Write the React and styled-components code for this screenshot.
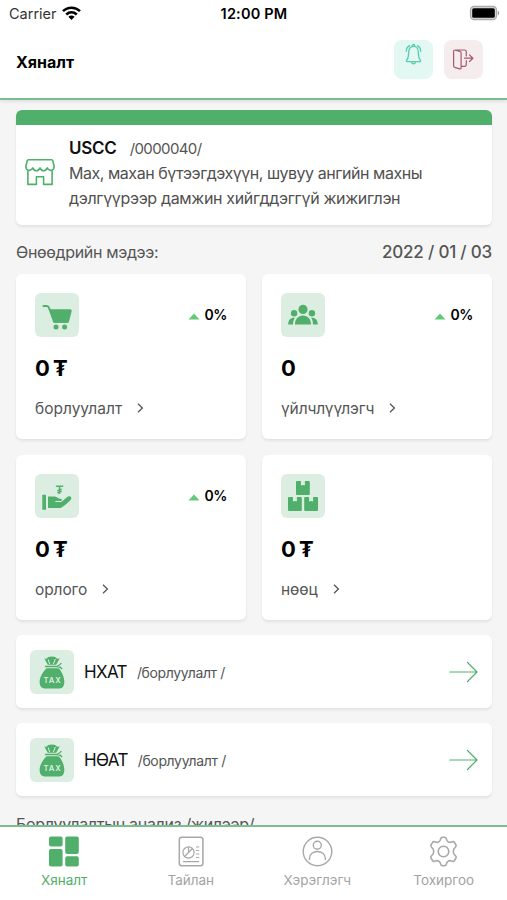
import React from "react";
import styled, { createGlobalStyle, css } from "styled-components";

const GREEN = "#50af6a";
const RULE = "#78be8e";

const GlobalStyle = createGlobalStyle`
  * { box-sizing: border-box; }
  body { margin: 0; background: #f5f5f5; overflow: hidden; }
`;

const type = css`
  font-size: ${(p) => p.$size}px;
  letter-spacing: ${(p) => p.$track || 0}px;
  white-space: nowrap;
`;

const Screen = styled.div`
  display: flex;
  flex-direction: column;
  width: 507px;
  height: 900px;
  background: #f5f5f5;
  font-family: Inter, "Noto Sans", "Liberation Sans", sans-serif;
  color: #000;
`;

const StatusBar = styled.div`
  display: grid;
  grid-template-columns: 1fr auto 1fr;
  align-items: center;
  height: 28px;
  padding: 0 7px 0 8px;
  background: #fff;
  flex: none;
  svg { display: block; }
`;
const Carrier = styled.div`
  display: flex;
  align-items: center;
  gap: 5px;
  padding-left: 1px;
  color: #333;
  line-height: 28px;
  ${type}
  svg { margin-top: -2px; }
`;
const Clock = styled.div`
  font-weight: 600;
  line-height: 28px;
  ${type}
`;
const BatterySlot = styled.div`
  justify-self: end;
  margin-top: -2px;
`;

const Header = styled.header`
  display: flex;
  align-items: center;
  height: 72px;
  padding: 0 24px 7px 16px;
  gap: 11px;
  background: #fff;
  border-bottom: 2px solid ${RULE};
  box-shadow: 0 2px 3px rgba(0, 0, 0, 0.08);
  flex: none;
  z-index: 1;
`;
const Title = styled.h1`
  margin: 4px auto 0 0;
  font-weight: 700;
  ${type}
`;
const HeaderButton = styled.button`
  width: 39px;
  height: 39px;
  padding: 0;
  border: 0;
  border-radius: 8px;
  background: ${(p) => p.$bg};
  svg { display: block; }
`;

const Content = styled.main`
  flex: 1;
  min-height: 0;
  overflow: hidden;
  padding: 10px 15px 0 16px;
`;

const cardBox = css`
  background: #fff;
  border-radius: 6px;
  box-shadow: 0 2px 3px rgba(0, 0, 0, 0.08);
`;
const StoreCard = styled.section`
  ${cardBox}
  height: 115px;
  border-top: 15px solid ${GREEN};
  display: flex;
  padding: 10px 0 0 8px;
  gap: 13px;
  svg { display: block; margin-top: 23px; flex: none; }
`;
const StoreHead = styled.div`
  display: flex;
  align-items: baseline;
  gap: 13px;
  height: 26px;
  line-height: 26px;
`;
const StoreName = styled.strong`
  font-weight: 600;
  color: #111;
  ${type}
`;
const Muted = styled.span`
  color: ${(p) => p.$color || "#555"};
  font-weight: ${(p) => p.$weight || 400};
  ${type}
`;
const Description = styled.p`
  margin: 0;
  color: #505050;
  line-height: 24.5px;
  ${type}
`;
const DescriptionLine = styled.span`
  display: block;
  letter-spacing: ${(p) => p.$track}px;
`;

const SectionRow = styled.div`
  display: flex;
  justify-content: space-between;
  align-items: center;
  height: 49px;
  padding-top: 4px;
`;

const Grid = styled.div`
  display: grid;
  grid-template-columns: 1fr 1fr;
  gap: 16px;
`;
const StatCard = styled.article`
  ${cardBox}
  height: 165px;
  padding: 19px 19px 0;
`;
const StatTop = styled.div`
  display: flex;
  justify-content: space-between;
  align-items: center;
`;
const IconTile = styled.div`
  width: 44px;
  height: 44px;
  border-radius: 6px;
  background: #dceee2;
  flex: none;
  svg { display: block; }
`;
const Change = styled.div`
  display: flex;
  align-items: center;
  gap: 5px;
  font-weight: 600;
  line-height: 20px;
  ${type}
  svg { display: block; margin-top: 2px; }
`;
const Value = styled.div`
  margin-top: 16px;
  height: 30px;
  line-height: 30px;
  font-weight: 700;
  word-spacing: -2px;
  ${type}
`;
const StatLink = styled.div`
  display: flex;
  align-items: center;
  gap: 15px;
  height: 24px;
  margin-top: 13px;
  svg { display: block; margin-top: -1px; }
`;

const TaxRow = styled.article`
  ${cardBox}
  display: flex;
  align-items: center;
  height: 73px;
  margin-top: 15px;
  padding: 0 14px;
`;
const TaxText = styled.div`
  display: flex;
  align-items: baseline;
  gap: 10px;
  margin-left: 10px;
  flex: 1;
`;
const TaxName = styled.span`
  color: #111;
  ${type}
`;
const NextHeading = styled.div`
  margin-top: 15px;
  line-height: 26px;
`;

const TabBar = styled.nav`
  display: grid;
  grid-template-columns: repeat(4, 1fr);
  height: 75px;
  padding-left: 1px;
  border-top: 2px solid ${RULE};
  background: #fff;
  flex: none;
`;
const Tab = styled.div`
  display: flex;
  flex-direction: column;
  align-items: center;
  padding-top: 9px;
  color: ${(p) => (p.$active ? GREEN : "#a3a3a3")};
  svg { display: block; }
`;
const TabLabel = styled.span`
  margin-top: 3px;
  line-height: 20px;
  ${type}
`;

const Wifi = () => (
  <svg width="19" height="15" viewBox="0 0 19 15">
    <g fill="none" stroke="#000" strokeWidth="2.5">
      <path d="M1 5.2C5.8.5 13.200.5 18 5.200" />
      <path d="M4.200 8.500c3.200-2.900 7.400-2.900 10.600 0" />
    </g>
    <path d="M6.400 10.800c1.900-1.600 4.300-1.600 6.200 0L9.500 14z" />
  </svg>
);
const Battery = () => (
  <svg width="31" height="16" viewBox="0 0 31 16">
    <rect x="1.500" y="1.500" width="26" height="13" rx="3.500" fill="#ddd" stroke="#aaa" strokeWidth="1.300" />
    <rect x="3.200" y="3.200" width="22.600" height="9.600" rx="1.500" />
    <path d="M28.800 5.700v4.600c1.800-.6 1.800-4 0-4.600" fill="#999" />
  </svg>
);
const Bell = () => (
  <svg width="39" height="39" viewBox="0 0 39 39" fill="none" stroke="#55cdb0" strokeWidth="1.300" strokeLinecap="round" strokeLinejoin="round">
    <path d="M19.500 6.300c-3.500 0-4.800 2.900-4.800 5.900 0 4.600-.8 6.500-2.100 8.200-.5.700-.2 1.300.6 1.300h12.600c.8 0 1.100-.6.600-1.300-1.300-1.700-2.100-3.600-2.100-8.200 0-3-1.300-5.900-4.800-5.900z" />
    <path d="M17.700 22.100c.2 2.300 3.400 2.300 3.600 0M18.300 6c0-2 2.400-2 2.400 0M12.300 11.200c0-2.600 1.200-4.400 3.300-5.500M26.700 11.200c0-2.600-1.200-4.400-3.300-5.500" />
  </svg>
);
const Exit = () => (
  <svg width="39" height="39" viewBox="0 0 39 39" fill="none" stroke="#a65a6d" strokeWidth="1.200" strokeLinecap="round" strokeLinejoin="round">
    <path d="M11.500 10.200l4.300 1.100q1.300.4 1.300 1.700v14.700q0 1.600-1.500 1.100l-4.800-1.400q-1.200-.4-1.200-1.700V11.600q0-1.600 1.600-1.600h9.300q1.800 0 1.800 1.700v4.200M22.300 20.500v4.100q0 1.700-1.700 1.700h-3.300" />
    <path d="M20.500 18.200h8M25.500 14.900l3.400 3.300-3.400 3.300" />
  </svg>
);
const Store = () => (
  <svg width="32" height="28" viewBox="0 0 32 28" fill="none" stroke={GREEN} strokeWidth="1.600" strokeLinejoin="round" strokeLinecap="round">
    <path d="M4.500 1.800h23q1 0 1.300 1l1.300 5.400c0 4.900-5 5.500-6.900 1.700-1.500 3.800-5.700 3.800-7.200 0-1.500 3.800-5.700 3.800-7.200 0C6.900 13.700 1.900 13.100 1.900 8.200l1.300-5.400q.3-1 1.300-1z" />
    <path d="M3.900 12.700v13.700h8.500v-7.600h7.200v7.600h8.500V12.700" />
  </svg>
);
const Cart = () => (
  <svg width="44" height="44" viewBox="0 0 44 44" fill={GREEN}>
    <path d="M8.500 13h3.200c1.300 0 2 .8 2.400 2l5 13.800h13.600" fill="none" stroke={GREEN} strokeWidth="2" strokeLinecap="round" />
    <path d="M14.500 16.200h20.300c1.600 0 2.200.8 1.800 2.200l-2.300 9c-.4 1.600-1.200 2.400-2.700 2.400H19.400z" />
    <circle cx="21" cy="33.900" r="2.500" />
    <circle cx="29.600" cy="33.900" r="2.500" />
  </svg>
);
const People = () => (
  <svg width="44" height="44" viewBox="0 0 44 44" fill={GREEN}>
    <circle cx="22" cy="16.400" r="4.600" />
    <circle cx="13.100" cy="20.300" r="3.200" />
    <circle cx="30.900" cy="20.300" r="3.200" />
    <path d="M14 31.500c0-5.500 3.300-9 8-9s8 3.500 8 9zM7.200 31.500c0-4.400 2.500-7.200 6.700-6.800-1.300 1.800-1.900 4-1.900 6.800zM36.800 31.500c0-4.400-2.500-7.200-6.700-6.800 1.300 1.800 1.900 4 1.900 6.800z" />
  </svg>
);
const HandMoney = () => (
  <svg width="44" height="44" viewBox="0 0 44 44" fill={GREEN}>
    <rect x="7.300" y="20.800" width="3.700" height="15" rx=".5" />
    <path d="M13 22.500h6.600c2 0 3.200 2.200 5.200 2.200h1c1.400 0 1.500 2.300 0 2.300h-5.500v1h6l5.600-4.800c2.600-2.200 5.600.1 4 2.200-2.300 3-5.300 4.900-8.600 7.500q-1.600 1.200-3.600 1.200H13z" />
    <path d="M20.900 12.300h7.300M24.500 12.300v7.700M22.400 16.700l4.300-1.600M22.400 18.900l4.300-1.600" fill="none" stroke={GREEN} strokeWidth="1.500" />
  </svg>
);
const Boxes = () => (
  <svg width="44" height="44" viewBox="0 0 44 44" fill={GREEN}>
    {[[15, 7], [7, 23], [23.200, 23]].map(([x, y]) => (
      <path key={x} transform={`translate(${x} ${y})`} d="M1 0h3.900v4.600q2-1.300 4 0V0h3.900q1 0 1 1v12q0 1-1 1H1q-1 0-1-1V1q0-1 1-1z" />
    ))}
  </svg>
);
const BagLabel = styled.text`
  font: 600 7.7px Inter, sans-serif;
  letter-spacing: 0.9px;
`;
const TaxBag = () => (
  <svg width="44" height="44" viewBox="0 0 44 44" fill={GREEN}>
    <path d="M14.200 8.200q2.300 1.400 4-1.100 4-1 7 0 2 2.500 4.600 1.100l-3.600 6.600h-8.500z" />
    <path d="M18.200 9.500l1.500 4.700M25.400 9l-2 5" stroke="#dceee2" strokeWidth="1" />
    <path d="M16.500 18.200h12.200c3.300 3.500 5.600 9 5.600 13.600 0 4.800-2 6.800-6 6.800H15.800c-4 0-6.200-2-6.200-6.500 0-5 3.200-10.300 6.900-13.900z" />
    <path d="M15 16.500h12.500q3.300.2 4.600 2.600M27.500 16q3-1.200 3.800-3" fill="none" stroke={GREEN} strokeWidth="1.300" />
    <BagLabel x="22.600" y="33.300" textAnchor="middle" fill="#dceee2">TAX</BagLabel>
  </svg>
);
const Up = () => (
  <svg width="12" height="7" viewBox="0 0 12 7"><path d="M.5 6.500L6 .5l5.500 6z" fill="#62ca79" /></svg>
);
const Chevron = () => (
  <svg width="7" height="10" viewBox="0 0 7 10" fill="none" stroke="#555" strokeWidth="1.300"><path d="M1 .8L5.400 5 1 9.200" /></svg>
);
const Arrow = () => (
  <svg width="29" height="22" viewBox="0 0 29 22" fill="none" stroke={GREEN} strokeWidth="1.200" strokeLinecap="round" strokeLinejoin="round">
    <path d="M.8 11h27M18.500 1.500L28 11l-9.500 9.500" />
  </svg>
);
const Dashboard = () => (
  <svg width="30" height="31" viewBox="0 0 30 31" fill={GREEN}>
    <rect x="0" y=".5" width="13.600" height="10" rx="2" />
    <rect x="0" y="13" width="13.600" height="17.500" rx="2" />
    <rect x="16.200" y=".5" width="13.600" height="17.500" rx="2" />
    <rect x="16.200" y="20.300" width="13.600" height="10.200" rx="2" />
  </svg>
);
const Report = () => (
  <svg width="30" height="31" viewBox="0 0 30 31" fill="none" stroke="#a8a8a8" strokeWidth="1.200">
    <rect x="3.300" y="1.200" width="23.600" height="28.600" rx="2.500" strokeWidth="1.500" />
    <circle cx="12.500" cy="16.500" r="5.600" />
    <path d="M12.500 10.900v5.600l-3.900 4M12.500 16.500l3.900-4M20 11h3.200M20 14.500h3.200M20 18h3.200M20 21.500h3.200M7 25.700h16.200" />
  </svg>
);
const User = () => (
  <svg width="31" height="31" viewBox="0 0 31 31" fill="none" stroke="#a8a8a8" strokeWidth="1.400">
    <circle cx="15.500" cy="15.500" r="14.300" />
    <circle cx="15.300" cy="9.300" r="4" />
    <path d="M7.500 24v-1.500c0-9.300 15.800-9.300 15.800 0V24" />
  </svg>
);
const Gear = () => (
  <svg width="31" height="31" viewBox="0 0 31 31" fill="none" stroke="#a8a8a8" strokeWidth="1.600" strokeLinejoin="round">
    <circle cx="15.500" cy="15.500" r="5.300" />
    <path d="M12.600 3q.4-1.800 1.900-1.800h2q1.500 0 1.900 1.800.3 2.200 2 3 1.500.8 3.400-.1 1.800-.8 2.600.4l1.600 2.700q.7 1.300-.9 2.600-1.800 1.200-1.800 3.900t1.800 3.900q1.600 1.300.9 2.600l-1.600 2.700q-.8 1.200-2.600.4-1.900-.9-3.400-.1-1.700.8-2 3-.4 1.800-1.900 1.800h-2q-1.500 0-1.900-1.800-.3-2.200-2-3-1.500-.8-3.400.1-1.800.8-2.600-.4L3 22q-.7-1.300.9-2.600 1.800-1.200 1.800-3.900t-1.800-3.900Q2.300 10.300 3 9l1.600-2.700q.8-1.200 2.600-.4 1.900.9 3.400.1 1.700-.8 2-3z" />
  </svg>
);

const stats = [
  { icon: Cart, value: "0 ₮", label: "борлуулалт", change: "0%" },
  { icon: People, value: "0", label: "үйлчлүүлэгч", change: "0%", track: -0.12 },
  { icon: HandMoney, value: "0 ₮", label: "орлого", change: "0%", track: -0.1 },
  { icon: Boxes, value: "0 ₮", label: "нөөц", track: -0.1 },
];
const taxes = [
  { name: "НХАТ", note: "/борлуулалт /" },
  { name: "НӨАТ", note: "/борлуулалт /" },
];
const tabs = [
  { icon: Dashboard, label: "Хяналт" },
  { icon: Report, label: "Тайлан" },
  { icon: User, label: "Хэрэглэгч" },
  { icon: Gear, label: "Тохиргоо" },
];

export default function App() {
  return (
    <Screen>
      <GlobalStyle />
      <StatusBar>
        <Carrier $size={14.500}>Carrier<Wifi /></Carrier>
        <Clock $size={14.500} $track={0.200}>12:00 PM</Clock>
        <BatterySlot><Battery /></BatterySlot>
      </StatusBar>
      <Header>
        <Title $size={16}>Хяналт</Title>
        <HeaderButton $bg="#e3f7f3" aria-label="Notifications"><Bell /></HeaderButton>
        <HeaderButton $bg="#f5ecee" aria-label="Sign out"><Exit /></HeaderButton>
      </Header>
      <Content>
        <StoreCard>
          <Store />
          <div>
            <StoreHead>
              <StoreName $size={17} $track={-0.250}>USCC</StoreName>
              <Muted $size={15} $track={-0.600}>/0000040/</Muted>
            </StoreHead>
            <Description $size={16}>
              <DescriptionLine $track={-0.460}>Мах, махан бүтээгдэхүүн, шувуу ангийн махны</DescriptionLine>
              <DescriptionLine $track={-0.340}>дэлгүүрээр дамжин хийгддэггүй жижиглэн</DescriptionLine>
            </Description>
          </div>
        </StoreCard>
        <SectionRow>
          <Muted $size={16} $track={-0.340}>Өнөөдрийн мэдээ:</Muted>
          <Muted $size={17} $weight={500} $track={-0.200}>2022 / 01 / 03</Muted>
        </SectionRow>
        <Grid>
          {stats.map(({ icon: Icon, value, label, change, track }) => (
            <StatCard key={label}>
              <StatTop>
                <IconTile><Icon /></IconTile>
                {change && <Change $size={14} $track={-0.400}><Up />{change}</Change>}
              </StatTop>
              <Value $size={22}>{value}</Value>
              <StatLink><Muted $size={15.500} $track={track}>{label}</Muted><Chevron /></StatLink>
            </StatCard>
          ))}
        </Grid>
        {taxes.map(({ name, note }) => (
          <TaxRow key={name}>
            <IconTile><TaxBag /></IconTile>
            <TaxText>
              <TaxName $size={17} $track={-0.650}>{name}</TaxName>
              <Muted $size={14} $track={-0.350}>{note}</Muted>
            </TaxText>
            <Arrow />
          </TaxRow>
        ))}
        <NextHeading><Muted $size={16} $track={-0.290}>Борлуулалтын анализ /жилээр/</Muted></NextHeading>
      </Content>
      <TabBar>
        {tabs.map(({ icon: Icon, label }, i) => (
          <Tab key={label} $active={i === 0}>
            <Icon />
            <TabLabel $size={13.500}>{label}</TabLabel>
          </Tab>
        ))}
      </TabBar>
    </Screen>
  );
}
